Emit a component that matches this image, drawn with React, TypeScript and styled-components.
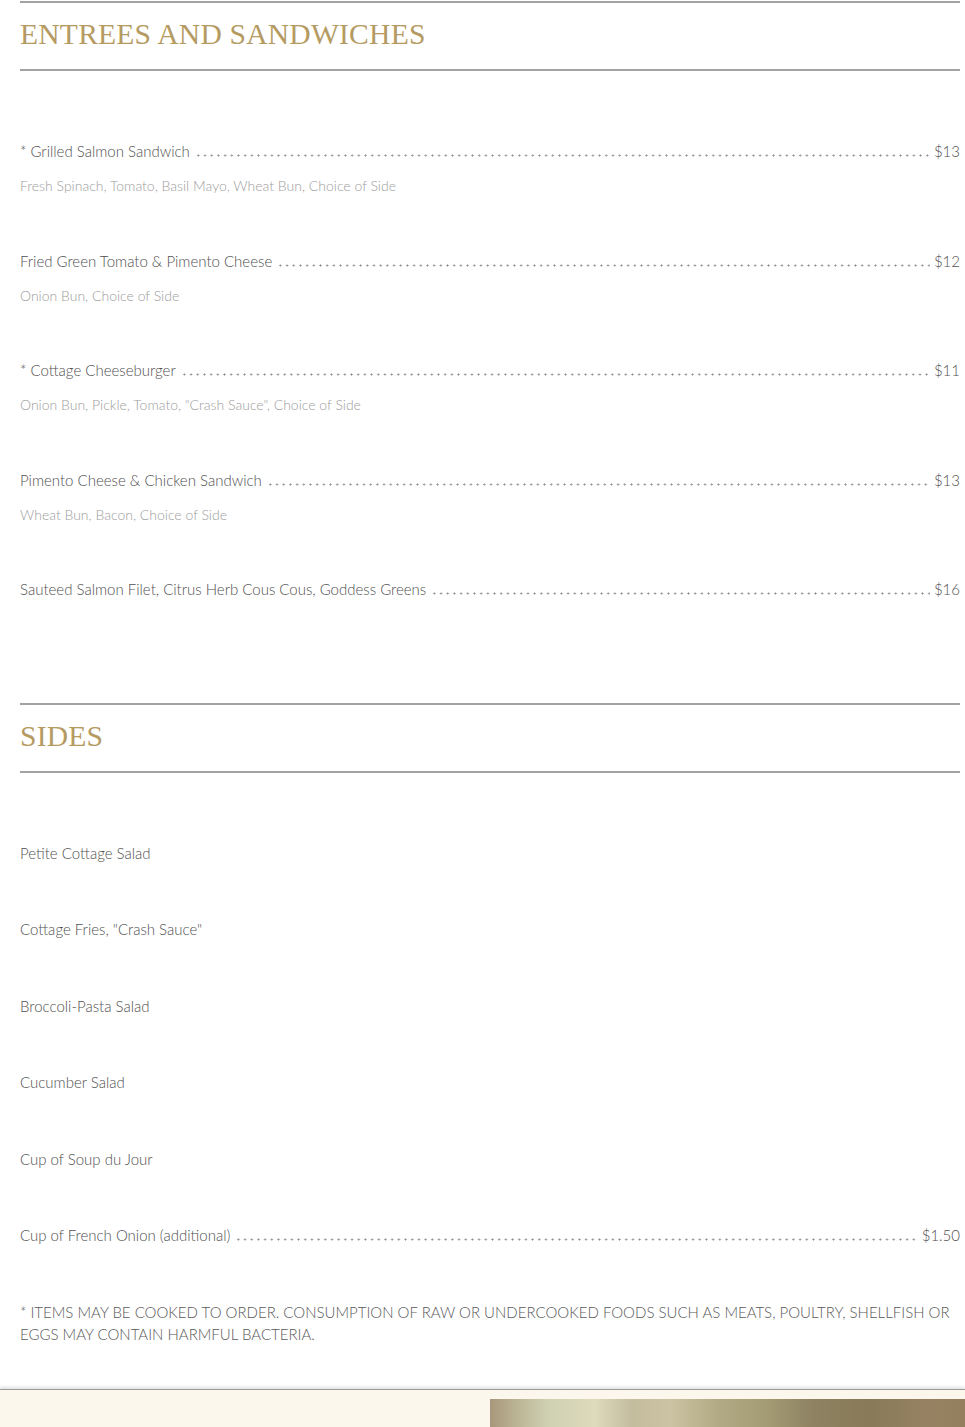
import React from 'react'
import styled, { createGlobalStyle } from 'styled-components'

const GlobalStyle = createGlobalStyle`
  html, body {
    margin: 0;
    padding: 0;
    background: #ffffff;
  }
  body {
    font-family: Lato, "Open Sans", "Liberation Sans", sans-serif;
    font-weight: 300;
    color: #555555;
  }
`

const Page = styled.div`
  width: 965px;
  padding-top: 1px;
`

const Section = styled.section<{ $spaceAbove?: number }>`
  padding: 0 5px 0 20px;
  margin-top: ${({ $spaceAbove = 0 }) => $spaceAbove}px;
`

const SectionHeader = styled.header`
  border-top: 2px solid #a2a2a2;
  border-bottom: 2px solid #a2a2a2;
  height: 70px;
  padding-bottom: 4px;
  box-sizing: border-box;
  display: flex;
  align-items: center;
`

const SectionTitle = styled.h2`
  margin: 0;
  font-family: "Liberation Serif", "DejaVu Serif", serif;
  font-weight: 400;
  font-size: 29.6px;
  letter-spacing: 0.2px;
  color: #b59b62;
`

const ItemList = styled.div<{ $top: number; $gap: number }>`
  display: flex;
  flex-direction: column;
  padding-top: ${({ $top }) => $top}px;
  gap: ${({ $gap }) => $gap}px;
`

const Item = styled.div`
  display: flex;
  flex-direction: column;
  gap: 13px;
`

const ItemRow = styled.div`
  display: flex;
  align-items: baseline;
  font-size: 15px;
  line-height: 22px;
  color: #505050;
`

const ItemName = styled.span`
  white-space: nowrap;
`

const Leader = styled.span`
  flex: 1;
  height: 3px;
  margin: 0 4px 0 5px;
  background-image: radial-gradient(circle, #8e8e8e 0.8px, transparent 1.3px);
  background-size: 6.7px 3px;
  background-repeat: repeat-x;
  background-position: left bottom;
`

const Price = styled.span`
  white-space: nowrap;
`

const Description = styled.div`
  font-size: 14px;
  line-height: 22px;
  color: #9c9c9c;
`

const Disclaimer = styled.p`
  margin: 55px 0 0;
  font-size: 15px;
  line-height: 22px;
  text-transform: uppercase;
  color: #5a5a5a;
`

const Footer = styled.footer`
  margin-top: 44px;
  height: 38px;
  border-top: 1px solid #9b9b9b;
  box-shadow: 0 -2px 3px rgba(0, 0, 0, 0.12);
  background: #fbf7ed;
  display: grid;
  grid-template-columns: 490px 1fr;
`

const GoldBand = styled.div`
  grid-column: 2;
  margin-top: 9px;
  background: linear-gradient(
    90deg,
    #a8977a 0%,
    #b9b192 5%,
    #cfd0b2 12%,
    #dedabc 22%,
    #c4bc9e 30%,
    #cbc3a2 38%,
    #b2aa84 48%,
    #a49c74 58%,
    #8e8262 68%,
    #887a58 80%,
    #968262 92%,
    #947e5e 100%
  );
`

type MenuItem = {
  name: string
  price?: string
  description?: string
}

const entrees: MenuItem[] = [
  {
    name: '* Grilled Salmon Sandwich',
    price: '$13',
    description: 'Fresh Spinach, Tomato, Basil Mayo, Wheat Bun, Choice of Side',
  },
  {
    name: 'Fried Green Tomato & Pimento Cheese',
    price: '$12',
    description: 'Onion Bun, Choice of Side',
  },
  {
    name: '* Cottage Cheeseburger',
    price: '$11',
    description: 'Onion Bun, Pickle, Tomato, "Crash Sauce", Choice of Side',
  },
  {
    name: 'Pimento Cheese & Chicken Sandwich',
    price: '$13',
    description: 'Wheat Bun, Bacon, Choice of Side',
  },
  {
    name: 'Sauteed Salmon Filet, Citrus Herb Cous Cous, Goddess Greens',
    price: '$16',
  },
]

const sides: MenuItem[] = [
  { name: 'Petite Cottage Salad' },
  { name: 'Cottage Fries, "Crash Sauce"' },
  { name: 'Broccoli-Pasta Salad' },
  { name: 'Cucumber Salad' },
  { name: 'Cup of Soup du Jour' },
  { name: 'Cup of French Onion (additional)', price: '$1.50' },
]

const MenuEntry = ({ item }: { item: MenuItem }) => (
  <Item>
    <ItemRow>
      <ItemName>{item.name}</ItemName>
      {item.price && (
        <>
          <Leader />
          <Price>{item.price}</Price>
        </>
      )}
    </ItemRow>
    {item.description && <Description>{item.description}</Description>}
  </Item>
)

export default function App() {
  return (
    <Page>
      <GlobalStyle />
      <Section>
        <SectionHeader>
          <SectionTitle>ENTREES AND SANDWICHES</SectionTitle>
        </SectionHeader>
        <ItemList $top={69} $gap={52.5}>
          {entrees.map((item) => (
            <MenuEntry key={item.name} item={item} />
          ))}
        </ItemList>
      </Section>

      <Section $spaceAbove={103}>
        <SectionHeader>
          <SectionTitle>SIDES</SectionTitle>
        </SectionHeader>
        <ItemList $top={69} $gap={54.4}>
          {sides.map((item) => (
            <MenuEntry key={item.name} item={item} />
          ))}
        </ItemList>
        <Disclaimer>
          * Items may be cooked to order. Consumption of raw or undercooked foods such as meats,
          poultry, shellfish or eggs may contain harmful bacteria.
        </Disclaimer>
      </Section>

      <Footer>
        <GoldBand />
      </Footer>
    </Page>
  )
}
